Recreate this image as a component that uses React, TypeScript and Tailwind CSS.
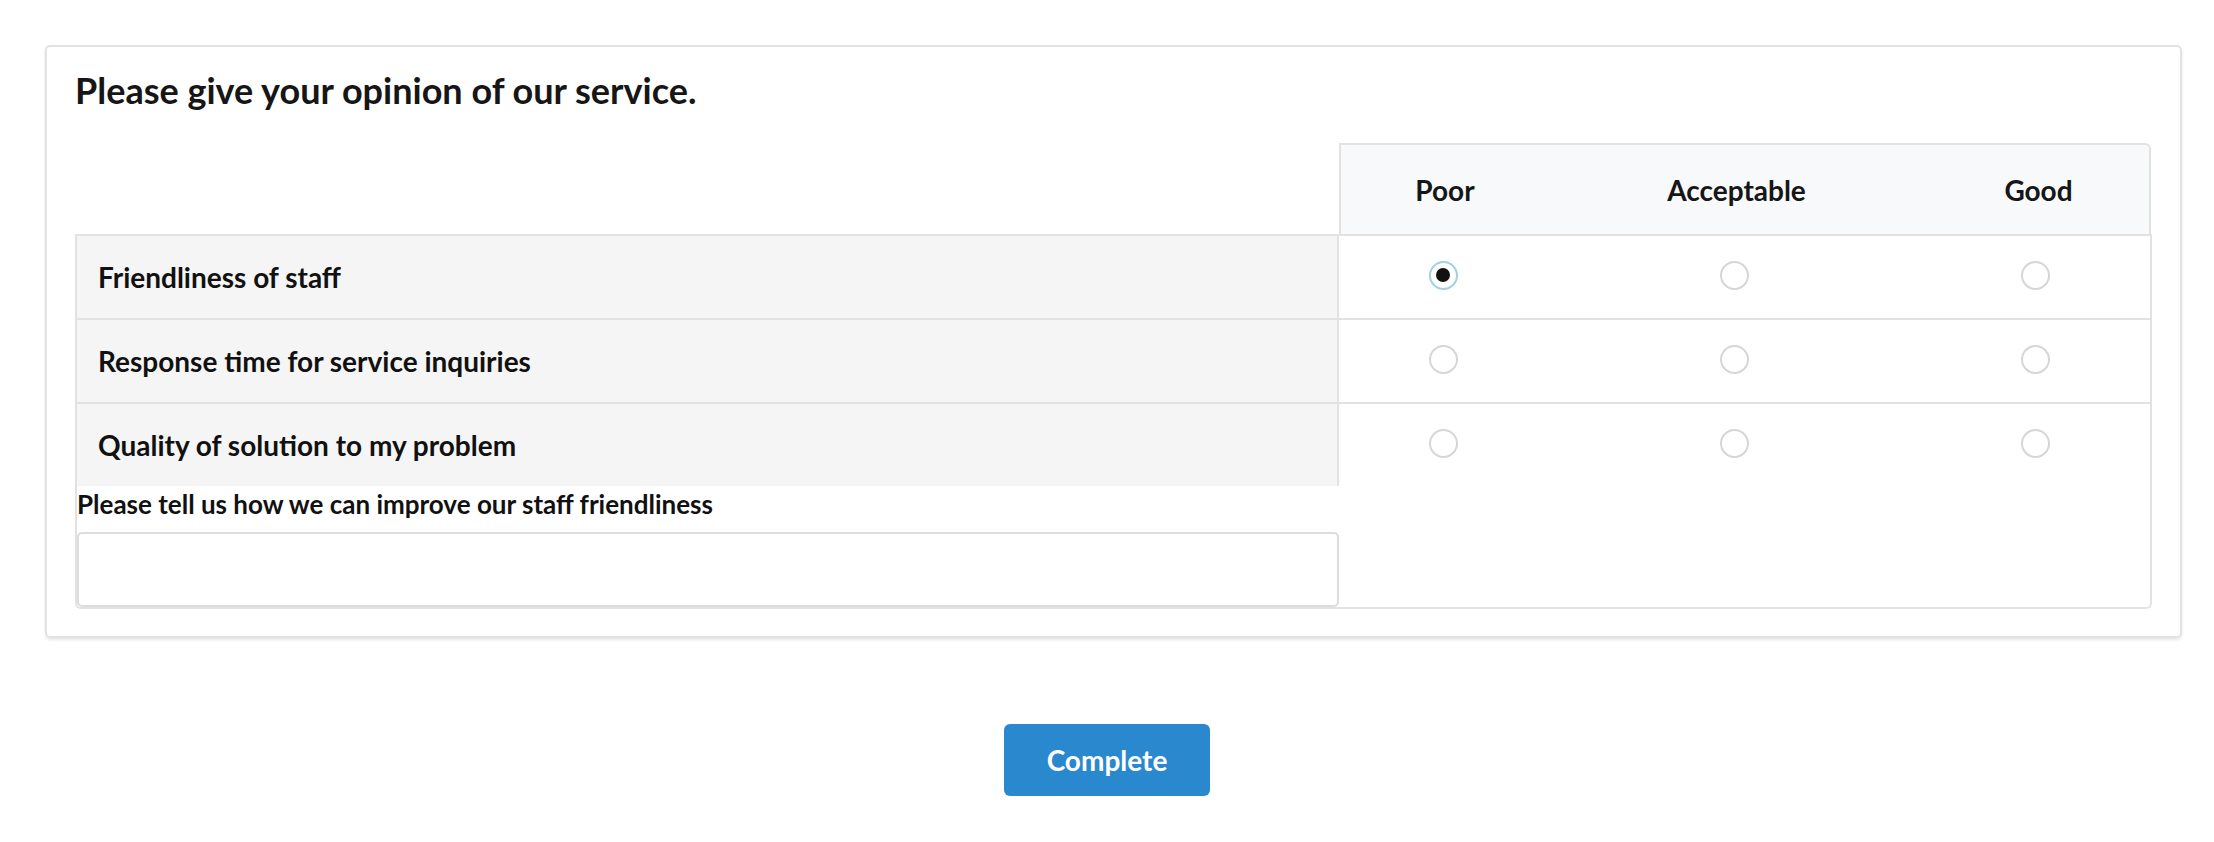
import React from "react";

const rows = [
  { label: "Friendliness of staff", value: 0 },
  { label: "Response time for service inquiries", value: -1 },
  { label: "Quality of solution to my problem", value: -1 },
];

function Radio({ checked }: { checked: boolean }) {
  return checked ? (
    <span className="flex h-[29px] w-[29px] items-center justify-center rounded-full border-2 border-[#a3d0e2] bg-white">
      <span className="h-[14px] w-[14px] rounded-full bg-[#111111]" />
    </span>
  ) : (
    <span className="block h-[29px] w-[29px] rounded-full border-2 border-[#d6d6d6] bg-white" />
  );
}

export default function App() {
  return (
    <div className="bg-white pb-[40px] font-['Lato','Noto_Sans',sans-serif] text-[#161616]">
      <div className="ml-[45px] mr-[32px] mt-[45px] rounded-[5px] border-2 border-[#e2e2e2] px-[28px] pb-[27px] pt-[19px] shadow-[0_2px_3px_rgba(0,0,0,0.10)]">
        <h1 className="text-[36px] font-bold leading-[48px]">Please give your opinion of our service.</h1>
        <div className="mt-[29px]">
          <div className="grid grid-cols-[1264px_812px]">
            <div />
            <div className="grid h-[91px] grid-cols-[208px_375px_229px] items-center rounded-tr-[6px] border-l-2 border-r-2 border-t-2 border-[#e2e2e2] bg-[#f8f9fa] text-center text-[28px] font-bold">
              <div>Poor</div>
              <div>Acceptable</div>
              <div>Good</div>
            </div>
          </div>
          <div className="rounded-b-[6px] border-b-2 border-l-2 border-r-2 border-[#e2e2e2]">
            {rows.map((r, i) => (
              <div key={i} className="grid h-[84px] grid-cols-[1262px_208px_375px_227px] border-t-2 border-[#e2e2e2]">
                <div className="flex items-center border-r-2 border-[#e2e2e2] bg-[#f5f5f5] pl-[21px] text-[28px] font-bold text-[#111111]">
                  {r.label}
                </div>
                {[0, 1, 2].map((c) => (
                  <div key={c} className="flex items-center justify-center pb-[4px]">
                    <Radio checked={r.value === c} />
                  </div>
                ))}
              </div>
            ))}
            <div className="w-[1262px]">
              <div className="text-[26px] font-bold leading-[36px] text-[#111111]">
                Please tell us how we can improve our staff friendliness
              </div>
              <textarea className="mt-[10px] block h-[75px] w-full resize-none rounded-[5px] border-2 border-[#dcdcdc] bg-white outline-none" />
            </div>
          </div>
        </div>
      </div>
      <div className="flex justify-center pt-[86px]">
        <button className="h-[72px] w-[206px] rounded-[6px] bg-[#2a88ce] text-[28px] font-bold text-white">
          Complete
        </button>
      </div>
    </div>
  );
}
